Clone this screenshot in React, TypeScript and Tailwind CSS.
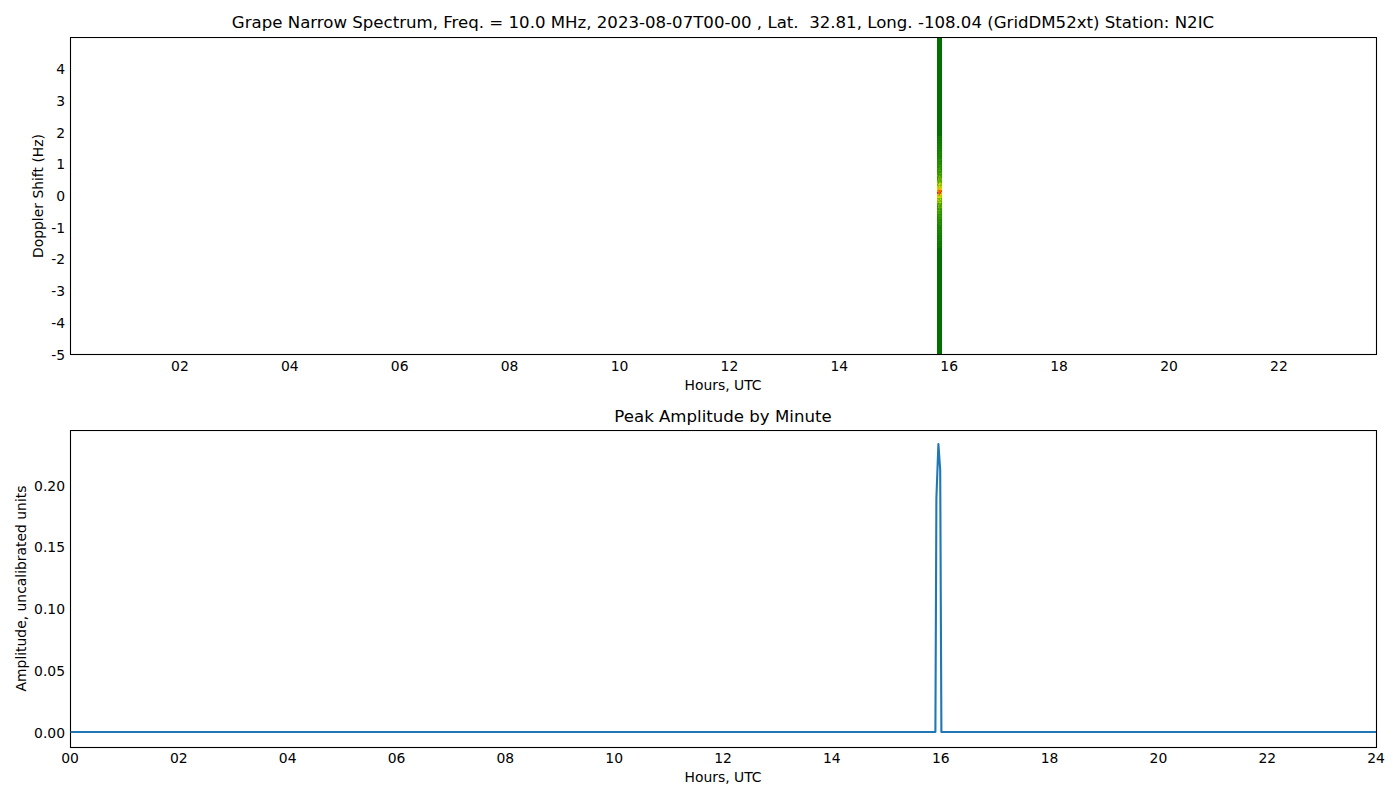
const FONT = "font-['DejaVu_Sans',sans-serif]"

const LEFT = 70.5
const RIGHT = 1376.5

// small repeatable noise so the spectrum strip looks the same every time
function noise(i: number, j: number) {
  const v = Math.sin(i * 127.1 + j * 311.7) * 43758.5453
  return v - Math.floor(v)
}

function specColor(t: number) {
  const stops: [number, number, number, number][] = [
    [0, 0, 112, 0],
    [0.3, 60, 160, 0],
    [0.55, 190, 220, 0],
    [0.72, 255, 215, 0],
    [0.88, 255, 120, 0],
    [1, 235, 30, 0],
  ]
  for (let k = 1; k < stops.length; k++) {
    const a = stops[k - 1]
    const b = stops[k]
    if (t <= b[0]) {
      const f = (t - a[0]) / (b[0] - a[0])
      return `rgb(${Math.round(a[1] + (b[1] - a[1]) * f)},${Math.round(a[2] + (b[2] - a[2]) * f)},${Math.round(a[3] + (b[3] - a[3]) * f)})`
    }
  }
  return 'rgb(235,30,0)'
}

function SpectrumStrip() {
  const cells = []
  for (let j = 0; j < 70; j++) {
    for (let i = 0; i < 5; i++) {
      const y = 136 + j * 1.6
      const dist = Math.abs(y - 191)
      const across = 1 - Math.abs(i - 1.8) * 0.06
      const t = (Math.exp(-dist / 2.5) * 0.5 + 0.85 * Math.exp(-dist / 24) * (0.62 + noise(i, j) * 0.4)) * across
      cells.push(
        <rect key={`${i}-${j}`} x={937 + i} y={y} width={1.05} height={1.7} fill={specColor(Math.min(1, t))} />,
      )
    }
  }
  return (
    <>
      <rect x={937} y={37} width={5} height={317} fill="#007000" />
      {cells}
    </>
  )
}

const topXTicks = ['02', '04', '06', '08', '10', '12', '14', '16', '18', '20', '22']
const topYTicks = [4, 3, 2, 1, 0, -1, -2, -3, -4, -5]
const bottomXTicks = ['00', '02', '04', '06', '08', '10', '12', '14', '16', '18', '20', '22', '24']
const bottomYTicks = ['0.20', '0.15', '0.10', '0.05', '0.00']

function TopChart() {
  return (
    <svg viewBox="0 37 1400 340" className="block h-[340px] w-[1400px]">
      <SpectrumStrip />
      <rect x={LEFT} y={37.5} width={RIGHT - LEFT} height={317} fill="none" stroke="#000" strokeWidth={1.1} />
      {topYTicks.map((v) => (
        <text key={v} x={65} y={196 - v * 31.7 + 5} textAnchor="end" fontSize={13.9} fill="#000">
          {v}
        </text>
      ))}
      {topXTicks.map((h) => (
        <text key={h} x={70 + Number(h) * 54.95} y={370.5} textAnchor="middle" fontSize={13.9} fill="#000">
          {h}
        </text>
      ))}
      <text transform="translate(42.5,196) rotate(-90)" textAnchor="middle" fontSize={13.9} fill="#000">
        Doppler Shift (Hz)
      </text>
    </svg>
  )
}

function BottomChart() {
  return (
    <svg viewBox="0 430 1400 339" className="block h-[339px] w-[1400px]">
      <rect x={LEFT} y={430.5} width={RIGHT - LEFT} height={317} fill="none" stroke="#000" strokeWidth={1.1} />
      <polyline
        points="70.5,732 935.4,732 936.4,498 938.4,444 940.2,470 941.4,732 1376,732"
        fill="none"
        stroke="#1f77b4"
        strokeWidth={2.1}
        strokeLinejoin="round"
      />
      {bottomYTicks.map((v) => (
        <text key={v} x={65} y={732.5 - Number(v) * 1235 + 5} textAnchor="end" fontSize={13.9} fill="#000">
          {v}
        </text>
      ))}
      {bottomXTicks.map((h) => (
        <text key={h} x={70 + Number(h) * 54.42} y={762.5} textAnchor="middle" fontSize={13.9} fill="#000">
          {h}
        </text>
      ))}
      <text transform="translate(25.5,588.5) rotate(-90)" textAnchor="middle" fontSize={13.9} fill="#000">
        Amplitude, uncalibrated units
      </text>
    </svg>
  )
}

function Title({ children, className }: { children: string; className: string }) {
  return (
    <h2 className={`flex items-end justify-center pr-[24px] pl-[70px] text-[16.6px] leading-5 font-normal whitespace-pre text-black ${className}`}>
      {children}
    </h2>
  )
}

function AxisLabel() {
  return <p className="pr-[24px] pl-[70px] text-center text-[13.9px] leading-4 text-black">Hours, UTC</p>
}

export default function App() {
  return (
    <div className={`flex h-[800px] w-[1400px] flex-col overflow-hidden bg-white ${FONT}`}>
      <section className="h-[400px]">
        <Title className="h-[33px]">
          {'Grape Narrow Spectrum, Freq. = 10.0 MHz, 2023-08-07T00-00 , Lat.  32.81, Long. -108.04 (GridDM52xt) Station: N2IC'}
        </Title>
        <div className="h-[4px]" />
        <TopChart />
        <AxisLabel />
      </section>
      <section>
        <Title className="h-[27px]">Peak Amplitude by Minute</Title>
        <div className="h-[3px]" />
        <BottomChart />
        <AxisLabel />
      </section>
    </div>
  )
}
